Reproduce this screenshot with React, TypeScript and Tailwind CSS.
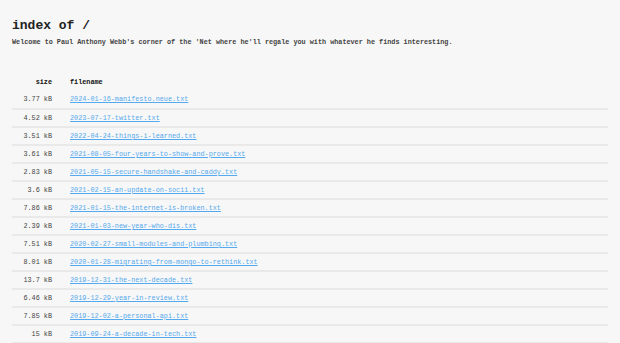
const files: [string, string][] = [
  ["3.77 kB", "2024-01-16-manifesto.neue.txt"],
  ["4.52 kB", "2023-07-17-twitter.txt"],
  ["3.51 kB", "2022-04-24-things-i-learned.txt"],
  ["3.61 kB", "2021-08-05-four-years-to-show-and-prove.txt"],
  ["2.83 kB", "2021-05-15-secure-handshake-and-caddy.txt"],
  ["3.6 kB", "2021-02-15-an-update-on-socii.txt"],
  ["7.86 kB", "2021-01-15-the-internet-is-broken.txt"],
  ["2.39 kB", "2021-01-03-new-year-who-dis.txt"],
  ["7.51 kB", "2020-02-27-small-modules-and-plumbing.txt"],
  ["8.01 kB", "2020-01-28-migrating-from-mongo-to-rethink.txt"],
  ["13.7 kB", "2019-12-31-the-next-decade.txt"],
  ["6.46 kB", "2019-12-29-year-in-review.txt"],
  ["7.85 kB", "2019-12-02-a-personal-api.txt"],
  ["15 kB", "2019-09-24-a-decade-in-tech.txt"],
];

export default function App() {
  return (
    <div className="min-h-screen bg-[#f7f7f7] text-[#222] px-3 pt-[17px] font-['Liberation_Mono',monospace]">
      <h1 className="text-[13px] font-bold leading-[18px]">index of /</h1>
      <p className="text-[6.8px] font-bold leading-[10px] mt-[2px] text-[#444]">
        Welcome to Paul Anthony Webb's corner of the 'Net where he'll regale you with whatever he finds interesting.
      </p>

      <table className="w-full mt-[26px] border-collapse text-[6.8px]">
        <thead>
          <tr className="h-[18px] font-bold text-[#111]">
            <th className="w-[58px] pr-[18px] text-right align-middle">size</th>
            <th className="text-left align-middle">filename</th>
          </tr>
        </thead>
        <tbody>
          {files.map(([size, name]) => (
            <tr key={name} className="h-[18px] border-b-2 border-[#e9e9e9]">
              <td className="pr-[18px] text-right align-middle text-[#444]">{size}</td>
              <td className="align-middle">
                <a href="#" className="text-[#55a9ee] underline">
                  {name}
                </a>
              </td>
            </tr>
          ))}
        </tbody>
      </table>
    </div>
  );
}
